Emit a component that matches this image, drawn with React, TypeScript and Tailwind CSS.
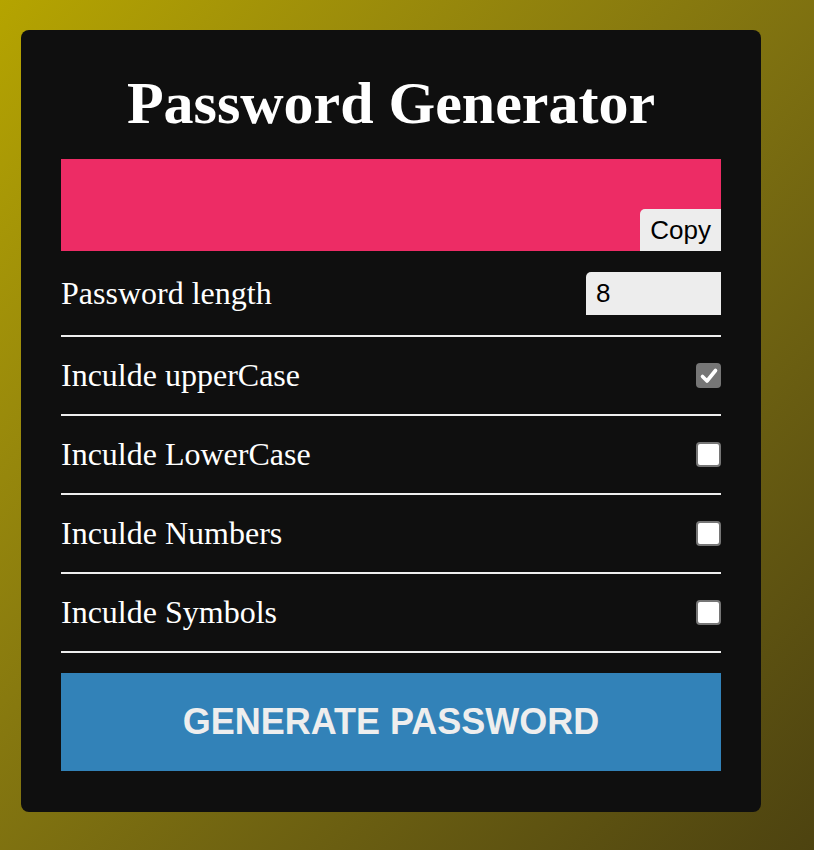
import React, { useState } from 'react'

type Opt = { key: string; label: string }

const options: Opt[] = [
  { key: 'upper', label: 'Inculde upperCase' },
  { key: 'lower', label: 'Inculde LowerCase' },
  { key: 'numbers', label: 'Inculde Numbers' },
  { key: 'symbols', label: 'Inculde Symbols' },
]

function Box({ checked, onClick }: { checked: boolean; onClick: () => void }) {
  return (
    <button
      onClick={onClick}
      className={`w-[25px] h-[25px] rounded-[4px] flex items-center justify-center ${
        checked ? 'bg-[#767676]' : 'bg-white border-2 border-[#767676]'
      }`}
    >
      {checked && (
        <svg width="20" height="20" viewBox="0 0 20 20">
          <path d="M3.5 10.5 L8 15 L16.5 4.5" fill="none" stroke="#fff" strokeWidth="3.6" strokeLinecap="round" strokeLinejoin="round" />
        </svg>
      )}
    </button>
  )
}

export default function App() {
  const [length, setLength] = useState<string>('8')
  const [checks, setChecks] = useState<Record<string, boolean>>({ upper: true })

  const toggle = (k: string) => setChecks({ ...checks, [k]: !checks[k] })

  return (
    <div className="min-h-[850px] w-full bg-linear-to-br from-[#b5a400] to-[#4d4310] pt-[30px] pl-[21px]">
      <div className="w-[740px] bg-[#0f0f0f] rounded-[8px] px-[40px] pt-[40px] pb-[41px] font-['Liberation_Serif',serif] text-white">
        <h1 className="text-[60px] font-bold text-center leading-[66px] mb-[23px]">Password Generator</h1>

        <div className="bg-[#ed2c65] h-[92px] flex items-end justify-end">
          <button className="bg-[#ededed] text-black font-['Liberation_Sans',Arial,sans-serif] text-[26px] h-[42px] px-[10px] rounded-tl-[5px] leading-none">
            Copy
          </button>
        </div>

        <div className="flex items-center justify-between pt-[21px] pb-[20px] border-b-2 border-[#eeeeee]">
          <span className="text-[32px] leading-[37px]">Password length</span>
          <input
            value={length}
            onChange={(e) => setLength(e.target.value)}
            className="w-[135px] h-[43px] bg-[#ededed] text-black font-['Liberation_Sans',Arial,sans-serif] text-[26px] pl-[10px] rounded-tl-[5px] outline-none"
          />
        </div>

        {options.map((o) => (
          <div key={o.key} className="flex items-center justify-between py-[20px] border-b-2 border-[#eeeeee]">
            <span className="text-[32px] leading-[37px]">{o.label}</span>
            <Box checked={!!checks[o.key]} onClick={() => toggle(o.key)} />
          </div>
        ))}

        <button className="mt-[20px] w-full h-[98px] bg-[#3282b8] text-[#eeeeee] font-['Liberation_Sans',Arial,sans-serif] font-bold text-[36px] uppercase">
          Generate Password
        </button>
      </div>
    </div>
  )
}
